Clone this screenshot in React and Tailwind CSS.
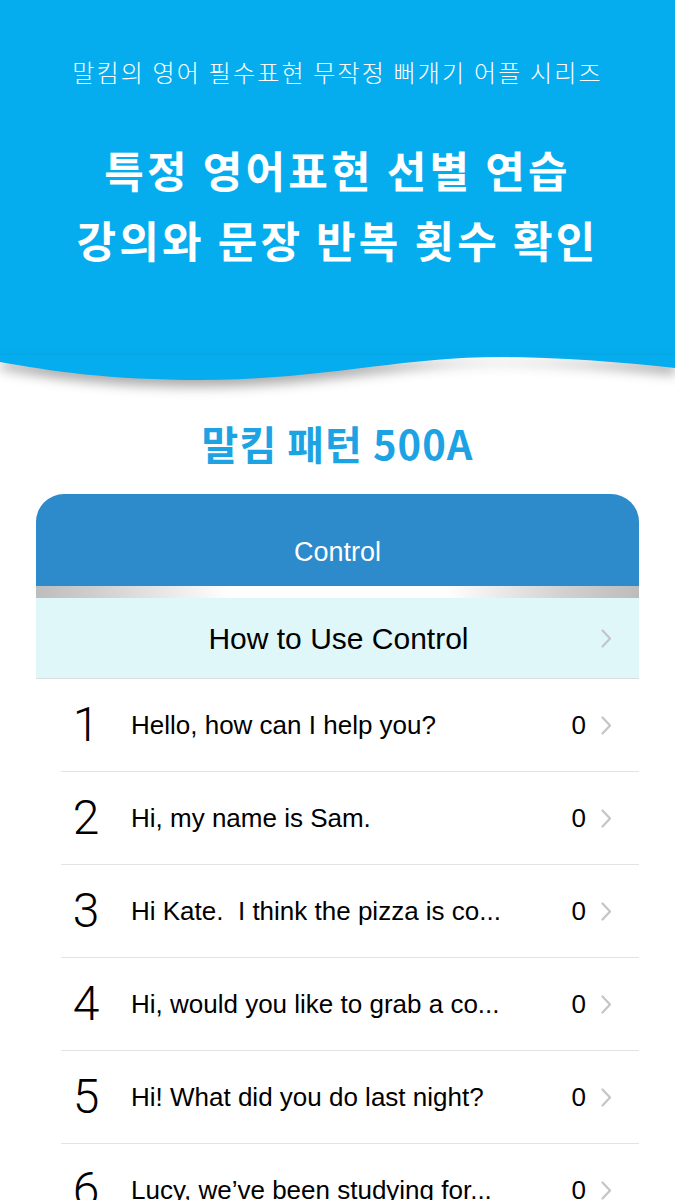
import { useState } from 'react'

// Sentence list as shown on the screen (long ones are already cut by the app)
const sentences = [
  { id: 1, text: 'Hello, how can I help you?', count: 0 },
  { id: 2, text: 'Hi, my name is Sam.', count: 0 },
  { id: 3, text: 'Hi Kate.  I think the pizza is co...', count: 0 },
  { id: 4, text: 'Hi, would you like to grab a co...', count: 0 },
  { id: 5, text: 'Hi! What did you do last night?', count: 0 },
  { id: 6, text: 'Lucy, we\u2019ve been studying for...', count: 0 },
]

const ko = { fontFamily: '"Noto Sans CJK KR", "Noto Sans", sans-serif' }
const en = { fontFamily: '"Liberation Sans", Arial, sans-serif' }

function Chevron() {
  return (
    <svg width="11" height="19" viewBox="0 0 11 19" fill="none" className="shrink-0">
      <path d="M1.5 1.5 L9 9.5 L1.5 17.5" stroke="#C4C4C9" strokeWidth="2.2" strokeLinecap="round" strokeLinejoin="round" />
    </svg>
  )
}

export default function App() {
  const [selected, setSelected] = useState(null)

  return (
    <div className="w-[675px] h-[1200px] overflow-hidden bg-white">
      {/* blue header with wavy bottom */}
      <div className="bg-[#06ADEE] h-[356px] flex flex-col items-center text-white pt-[56px]" style={ko}>
        <p className="text-[24px] leading-[32px] font-light tracking-[2.2px]">말킴의 영어 필수표현 무작정 뻐개기 어플 시리즈</p>
        <h1 className="mt-[46px] text-[43px] leading-[70px] font-bold text-center tracking-[3.2px]">
          특정 영어표현 선별 연습
          <br />
          강의와 문장 반복 횟수 확인
        </h1>
      </div>
      <svg
        width="675"
        height="30"
        viewBox="0 0 675 30"
        className="block -mt-px drop-shadow-[0_7px_6px_rgba(0,0,0,0.32)]"
      >
        <path
          d="M0 0 H675 V13 C620 7 560 2 500 2 C400 2 320 25 200 25 C110 25 50 16 0 7 Z"
          fill="#06ADEE"
        />
      </svg>

      <h2 className="mt-[35px] text-center text-[40px] leading-[46px] font-bold text-[#1DA3E3] tracking-[1px]" style={ko}>
        말킴 패턴 500A
      </h2>

      {/* control card */}
      <div className="mx-[36px] mt-[28px]" style={en}>
        <div className="h-[92px] bg-[#2D8ACB] rounded-t-[28px] flex items-end justify-center pb-[18px]">
          <span className="text-white text-[27px] leading-[32px]">Control</span>
        </div>
        <div className="h-[12px] bg-[linear-gradient(to_right,#bdbdbd_0%,#cfcfcf_10%,#ffffff_32%,#ffffff_68%,#d0d0d0_88%,#bcbcbc_100%)]" />
        <button className="w-full h-[81px] bg-[#E0F7FA] border-b border-[#d9dde0] flex items-center pl-[40px] pr-[27px]">
          <span className="flex-1 text-center text-[30px] text-black">How to Use Control</span>
          <Chevron />
        </button>

        {sentences.map((s) => (
          <button
            key={s.id}
            onClick={() => setSelected(s.id)}
            className={`w-full h-[93px] flex items-center pl-[25px] ${selected === s.id ? 'bg-gray-100' : ''}`}
          >
            <div className="flex-1 h-full flex items-center border-b border-[#e3e3e3] pr-[27px]">
              <span className="w-[50px] text-center text-[48px] font-light text-black" style={{ fontFamily: 'Roboto, sans-serif' }}>
                {s.id}
              </span>
              <span className="ml-[20px] flex-1 text-left text-[26px] text-black truncate whitespace-pre">{s.text}</span>
              <span className="text-[26px] text-black mr-[15px]">{s.count}</span>
              <Chevron />
            </div>
          </button>
        ))}
      </div>
    </div>
  )
}
